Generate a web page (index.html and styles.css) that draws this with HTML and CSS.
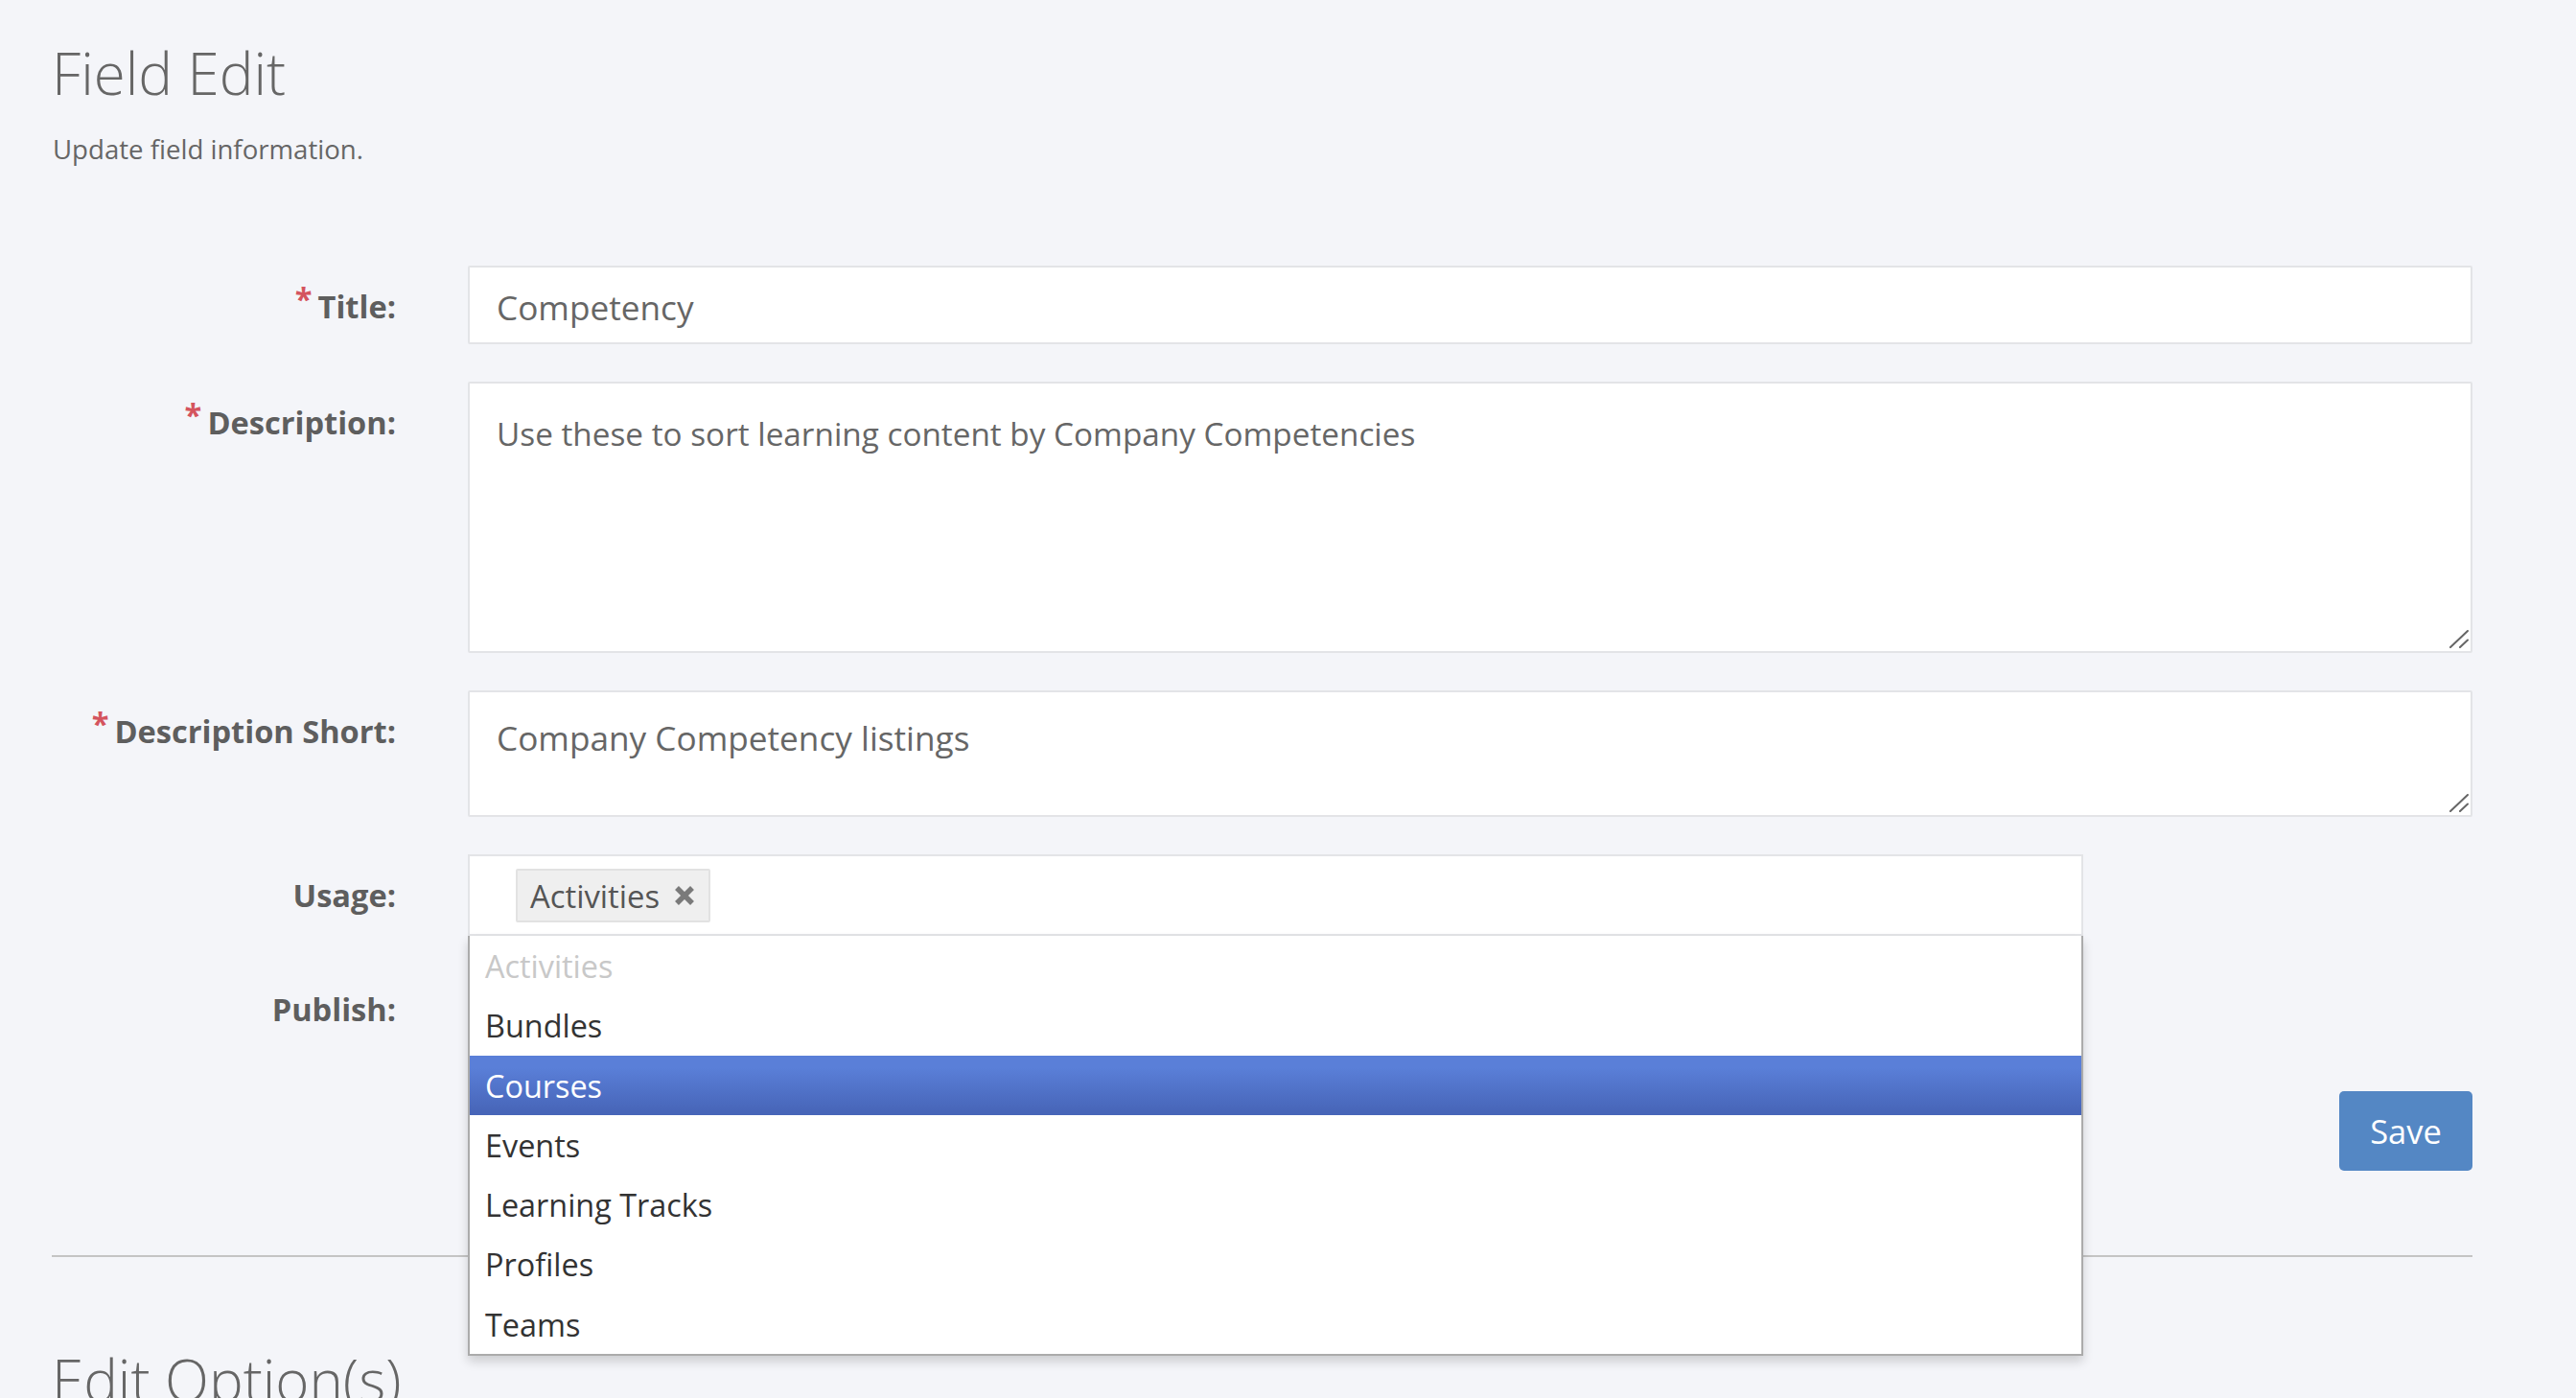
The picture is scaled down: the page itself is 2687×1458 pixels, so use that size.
FILE: index.html
```html
<!DOCTYPE html>
<html lang="en">
<head>
<meta charset="utf-8">
<title>Field Edit</title>
<link rel="stylesheet" href="styles.css">
</head>
<body>
<div class="page">
  <header class="page-head">
    <h1 class="page-title">Field Edit</h1>
    <p class="page-sub">Update field information.</p>
  </header>

  <form class="form">
    <div class="row">
      <label class="label"><span class="req">*</span>Title:</label>
      <div class="field"><input class="input" type="text" value="Competency"></div>
    </div>
    <div class="row">
      <label class="label"><span class="req">*</span>Description:</label>
      <div class="field ta-wrap">
        <textarea class="textarea textarea-desc">Use these to sort learning content by Company Competencies</textarea>
        <svg class="grip" width="20" height="19" viewBox="0 0 20 19"><path d="M1 18 L19 1 M11 18 L19 10.5" stroke="#666" stroke-width="2" stroke-linecap="round"/></svg>
      </div>
    </div>
    <div class="row">
      <label class="label"><span class="req">*</span>Description Short:</label>
      <div class="field ta-wrap">
        <textarea class="textarea textarea-short">Company Competency listings</textarea>
        <svg class="grip" width="20" height="19" viewBox="0 0 20 19"><path d="M1 18 L19 1 M11 18 L19 10.5" stroke="#666" stroke-width="2" stroke-linecap="round"/></svg>
      </div>
    </div>
    <div class="row">
      <label class="label label-usage">Usage:</label>
      <div class="field field-usage">
        <div class="chosen">
          <div class="choices">
            <span class="choice">Activities<svg class="choice-x" width="22" height="20" viewBox="0 0 22 20"><path d="M3 2 L19 18 M19 2 L3 18" stroke="#7a7a7a" stroke-width="5.5" stroke-linecap="butt"/></svg></span>
          </div>
          <ul class="drop">
            <li class="opt opt-disabled">Activities</li>
            <li class="opt">Bundles</li>
            <li class="opt opt-active">Courses</li>
            <li class="opt">Events</li>
            <li class="opt">Learning Tracks</li>
            <li class="opt">Profiles</li>
            <li class="opt">Teams</li>
          </ul>
        </div>
      </div>
    </div>
    <div class="row">
      <label class="label label-publish">Publish:</label>
      <div class="field field-publish"></div>
    </div>
    <div class="actions">
      <button type="button" class="btn">Save</button>
    </div>
  </form>

  <hr class="divider">
  <h2 class="page-title section-title">Edit Option(s)</h2>
</div>
</body>
</html>
```

FILE: styles.css
```css
* { box-sizing: border-box; }
html, body { margin: 0; padding: 0; }
body {
  background: #f4f5f9;
  font-family: "Open Sans", "Liberation Sans", sans-serif;
  color: #666;
  overflow: hidden;
  height: 1458px;
}
.page {
  padding: 43px 108px 0 54px;
}
.page-title {
  font-weight: 300;
  font-size: 60px;
  line-height: 66px;
  margin: 0;
  color: #666;
}
.page-sub {
  font-size: 27.6px;
  line-height: 36px;
  margin: 28px 1px 0;
  color: #666;
}
.form {
  margin-top: 104px;
}
.row {
  display: flex;
  gap: 75px;
  margin-bottom: 39px;
}
.label {
  flex: 0 0 359px;
  text-align: right;
  font-weight: 700;
  font-size: 32.6px;
  line-height: 69px;
  color: #5e5e5e;
}
.label-usage {
  line-height: 85px;
}
.label-publish {
  line-height: 75px;
}
.req {
  color: #d4545e;
  vertical-align: 8px;
  margin-right: 6px;
}
.field {
  flex: 1 1 auto;
  min-width: 0;
}
.ta-wrap {
  position: relative;
}
.grip {
  position: absolute;
  right: 4px;
  bottom: 5px;
  display: block;
}
.input, .textarea {
  display: block;
  width: 100%;
  border: 2px solid #e3e4e7;
  border-radius: 2px;
  background: #fff;
  font-family: "Open Sans", "Liberation Sans", sans-serif;
  font-size: 35.2px;
  color: #666;
  padding: 0 28px;
  outline: none;
  margin: 0;
}
.input {
  height: 82px;
  line-height: 75px;
  padding-top: 3px;
}
.textarea {
  line-height: 48px;
  resize: none;
  overflow: hidden;
}
.textarea-desc {
  height: 283px;
  padding-top: 28px;
  font-size: 33.3px;
}
.textarea-short {
  height: 132px;
  padding-top: 23px;
}
.field-usage {
  flex: 0 0 1685px;
}
.chosen {
  position: relative;
}
.choices {
  height: 85px;
  border: 2px solid #e3e4e7;
  background: #fff;
  padding: 13px 0 0 48px;
}
.choice {
  display: inline-flex;
  align-items: center;
  height: 56px;
  padding: 0 14px 0 13px;
  background: #efefef;
  border: 2px solid #e2e2e2;
  border-radius: 2px;
  font-size: 32.8px;
  color: #555;
  gap: 15px;
}
.choice-x {
  display: block;
}
.drop {
  position: absolute;
  left: 0;
  right: 0;
  top: 85px;
  margin: 0;
  padding: 0;
  list-style: none;
  background: #fff;
  border: 2px solid #ababab;
  border-top: 0;
  box-shadow: 0 6px 10px rgba(0, 0, 0, 0.16);
  z-index: 5;
}
.opt {
  height: 62.3px;
  line-height: 62px;
  padding: 0 16px;
  font-size: 32.4px;
  color: #333;
}
.opt-disabled {
  color: #c8c8c8;
}
.opt-active {
  color: #fff;
  background: linear-gradient(#5a7fd8 20%, #4765b8 95%);
}
.field-publish {
  height: 82px;
}
.actions {
  display: flex;
  justify-content: flex-end;
  margin-top: 41px;
}
.btn {
  width: 139px;
  height: 83px;
  border: 0;
  border-radius: 5px;
  background: #5487c4;
  color: #fff;
  font-family: "Open Sans", "Liberation Sans", sans-serif;
  font-size: 34.5px;
  padding: 0;
}
.divider {
  border: 0;
  border-top: 2px solid #c4c4c4;
  margin: 88px 0 0;
}
.section-title {
  margin-top: 95px;
}
```
